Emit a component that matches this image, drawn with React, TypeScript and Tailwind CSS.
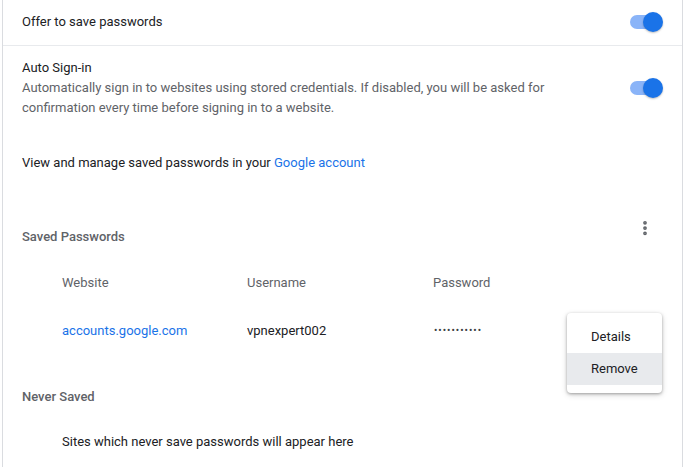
import { EllipsisVertical } from "lucide-react";

function Toggle() {
  return (
    <div className="relative w-[34px] h-[20px] flex items-center shrink-0">
      <div className="w-[30px] h-[14px] ml-[1px] rounded-full bg-[#8ab4f8]" />
      <div className="absolute right-0 top-0 w-[20px] h-[20px] rounded-full bg-[#1a73e8] shadow-[0_1px_2px_rgba(0,0,0,0.25)]" />
    </div>
  );
}

export default function App() {
  return (
    <div
      className="w-[684px] h-[467px] overflow-hidden bg-white pl-[2px] text-[13px] leading-[20px] text-[#202124]"
      style={{ fontFamily: "Roboto, 'Liberation Sans', sans-serif" }}
    >
      <div className="relative w-[681px] h-full border-x border-[#dadce0]">
        {/* Offer to save */}
        <div className="h-[46px] flex items-center justify-between pl-[19px] pr-[19px] pb-[2px] border-b border-[#e8eaed]">
          <span>Offer to save passwords</span>
          <Toggle />
        </div>

        {/* Auto sign-in */}
        <div className="flex items-center justify-between pl-[19px] pr-[19px] pt-[12px]">
          <div className="max-w-[560px]">
            <div>Auto Sign-in</div>
            <div className="text-[#5f6368]">
              Automatically sign in to websites using stored credentials. If disabled, you will be asked for
              confirmation every time before signing in to a website.
            </div>
          </div>
          <Toggle />
        </div>

        <div className="pl-[19px] mt-[35px]">
          View and manage saved passwords in your{" "}
          <span className="text-[#1a73e8]">Google account</span>
        </div>

        {/* Saved passwords header */}
        <div className="flex items-center justify-between pl-[19px] pr-[17px] mt-[54px] h-[20px]">
          <span className="font-medium text-[#5f6368]">Saved Passwords</span>
          <div className="w-[40px] h-[40px] -mt-[18px] flex items-center justify-center text-[#5f6368]">
            <EllipsisVertical size={18} strokeWidth={3} />
          </div>
        </div>

        {/* Table header */}
        <div className="grid grid-cols-[185px_186px_1fr] pl-[59px] mt-[26px] text-[#5f6368]">
          <span>Website</span>
          <span>Username</span>
          <span>Password</span>
        </div>

        {/* Row */}
        <div className="grid grid-cols-[185px_186px_1fr] pl-[59px] mt-[28px] items-center">
          <span className="text-[#1a73e8]">accounts.google.com</span>
          <span>vpnexpert002</span>
          <span className="text-[10px] tracking-[1px] text-[#3c4043] pl-[1px]">•••••••••••</span>
        </div>

        <div className="pl-[19px] mt-[46px] font-medium text-[#5f6368]">Never Saved</div>

        <div className="pl-[59px] mt-[25px]">Sites which never save passwords will appear here</div>

        {/* Action menu */}
        <div className="absolute left-[564px] top-[313px] w-[95px] py-[8px] bg-white rounded-[4px] shadow-[0_1px_3px_rgba(0,0,0,0.3),0_2px_6px_rgba(0,0,0,0.15)]">
          <div className="h-[32px] flex items-center pl-[24px]">Details</div>
          <div className="h-[32px] flex items-center pl-[24px] bg-[#e8eaed]">Remove</div>
        </div>
      </div>
    </div>
  );
}
